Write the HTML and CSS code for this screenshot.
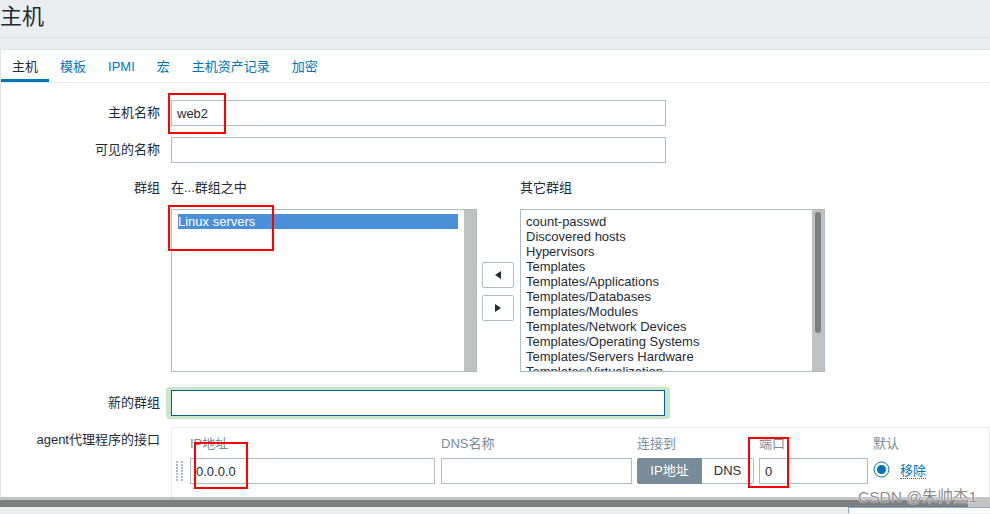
FILE: index.html
```html
<!DOCTYPE html>
<html>
<head>
<meta charset="utf-8">
<link rel="stylesheet" href="styles.css">
</head>
<body>
<header class="page-header"><h1 class="title">主机</h1></header>
<main class="card">
  <nav class="tabs">
    <span class="tab active">主机</span>
    <span class="tab">模板</span>
    <span class="tab">IPMI</span>
    <span class="tab">宏</span>
    <span class="tab">主机资产记录</span>
    <span class="tab">加密</span>
  </nav>
  <div class="form">
    <div class="row row-name">
      <label class="lbl">主机名称</label>
      <input class="text wide" value="web2">
    </div>
    <div class="row row-visible">
      <label class="lbl">可见的名称</label>
      <input class="text wide" value="">
    </div>
    <div class="row row-groups">
      <label class="lbl lbl-top">群组</label>
      <div class="groups">
        <div class="ghead">在...群组之中</div>
        <div></div>
        <div class="ghead">其它群组</div>
        <div class="listbox">
          <div class="opts"><div class="opt sel">Linux servers</div></div>
          <div class="sb"></div>
        </div>
        <div class="movebtns">
          <button class="mv"><svg width="6" height="8" viewBox="0 0 6 8"><polygon points="6,0 6,8 0,4" fill="#1f2c33"/></svg></button>
          <button class="mv"><svg width="6" height="8" viewBox="0 0 6 8"><polygon points="0,0 0,8 6,4" fill="#1f2c33"/></svg></button>
        </div>
        <div class="listbox">
          <div class="opts opts-right">
            <div class="opt">count-passwd</div>
            <div class="opt">Discovered hosts</div>
            <div class="opt">Hypervisors</div>
            <div class="opt">Templates</div>
            <div class="opt">Templates/Applications</div>
            <div class="opt">Templates/Databases</div>
            <div class="opt">Templates/Modules</div>
            <div class="opt">Templates/Network Devices</div>
            <div class="opt">Templates/Operating Systems</div>
            <div class="opt">Templates/Servers Hardware</div>
            <div class="opt">Templates/Virtualization</div>
          </div>
          <div class="sb"><div class="thumb"></div></div>
        </div>
      </div>
    </div>
    <div class="row row-new">
      <label class="lbl">新的群组</label>
      <div class="focus-wrap"><input class="text focused" value=""></div>
    </div>
    <div class="row row-iface">
      <label class="lbl lbl-iface">agent代理程序的接口</label>
      <div class="iface">
        <div class="igrid ihead">
          <span></span><span>IP地址</span><span>DNS名称</span><span>连接到</span><span>端口</span><span>默认</span><span></span>
        </div>
        <div class="igrid irow">
          <span class="handle"><svg width="8" height="20" viewBox="0 0 8 20">
            <g fill="#acbbc4">
              <rect x="0" y="0" width="2" height="2"/><rect x="5" y="0" width="2" height="2"/>
              <rect x="0" y="3" width="2" height="2"/><rect x="5" y="3" width="2" height="2"/>
              <rect x="0" y="6" width="2" height="2"/><rect x="5" y="6" width="2" height="2"/>
              <rect x="0" y="9" width="2" height="2"/><rect x="5" y="9" width="2" height="2"/>
              <rect x="0" y="12" width="2" height="2"/><rect x="5" y="12" width="2" height="2"/>
              <rect x="0" y="15" width="2" height="2"/><rect x="5" y="15" width="2" height="2"/>
              <rect x="0" y="18" width="2" height="2"/><rect x="5" y="18" width="2" height="2"/>
            </g></svg></span>
          <span><input class="text ip" value="0.0.0.0"></span>
          <span><input class="text dns" value=""></span>
          <span class="seg"><span class="segbtn on">IP地址</span><span class="segbtn">DNS</span></span>
          <span><input class="text port" value="0"></span>
          <span class="radio"><svg width="17" height="17" viewBox="0 0 17 17"><circle cx="8.5" cy="8.5" r="7.5" fill="#fff" stroke="#0275b8"/><circle cx="8.5" cy="8.5" r="4.5" fill="#0275b8"/></svg></span>
          <span class="linkcell"><span class="link">移除</span></span>
        </div>
      </div>
    </div>
  </div>
</main>
<div class="hscroll"><div class="hthumb"></div></div>
<footer class="bottom"><div class="peek">Ⅱ Macros Mac</div></footer>

<div class="mark m1"></div>
<div class="mark m2"></div>
<div class="mark m3"></div>
<div class="mark m4"></div>
<div class="watermark">CSDN @朱帅杰1</div>
</body>
</html>
```
FILE: styles.css
```css
* { box-sizing: border-box; }
html, body { margin: 0; padding: 0; }
body {
  width: 990px;
  height: 514px;
  overflow: hidden;
  position: relative;
  background: #ebeef0;
  font-family: "Liberation Sans", "Noto Sans CJK SC", sans-serif;
  font-size: 13px;
  color: #1f2c33;
}
.page-header {
  height: 38px;
  border-bottom: 1px solid #dde1e4;
}
.title {
  margin: 0;
  font-weight: normal;
  font-size: 22px;
  line-height: 34px;
  color: #1f2c33;
  padding-left: 0;
}
.card {
  margin-top: 11px;
  height: 448px;
  background: #fff;
  border-top: 1px solid #dfe4e7;
  border-left: 1px solid #dfe4e7;
  overflow: hidden;
}
.tabs {
  display: flex;
  height: 33px;
  border-bottom: 1px solid #e8e8e8;
}
.tab {
  padding: 0 11px;
  line-height: 33px;
  height: 32px;
  font-size: 13px;
  color: #0275b8;
}
.tab.active {
  color: #1f2c33;
  box-shadow: inset 0 -3px 0 #0275b8;
}
.form { padding-top: 17px; }
.row {
  display: grid;
  grid-template-columns: 159px auto;
  column-gap: 11px;
  align-items: center;
  justify-content: start;
}
.row-name { margin-bottom: 11px; }
.row-visible { margin-bottom: 15px; }
.row-groups { align-items: start; margin-bottom: 15px; }
.row-new { margin-bottom: 8px; }
.row-iface { align-items: start; }
.lbl {
  text-align: right;
  line-height: 20px;
  color: #1f2c33;
}
.lbl-iface { padding-top: 3px; }
.text {
  height: 26px;
  border: 1px solid #acbbc4;
  background: #fff;
  padding: 0 5px;
  font: inherit;
  color: #1f2c33;
  border-radius: 0;
  outline: none;
}
.wide { width: 495px; }
.groups {
  display: grid;
  grid-template-columns: 306px 43px 305px;
  row-gap: 11px;
}
.ghead { line-height: 20px; }
.listbox {
  height: 163px;
  border: 1px solid #acbbc4;
  display: flex;
  overflow: hidden;
}
.opts {
  flex: 1;
  padding: 4px 6px 0 6px;
  line-height: 15px;
  overflow: hidden;
}
.opts-right { padding-left: 5px; }
.opt { white-space: nowrap; height: 15px; }
.opt.sel { background: #4a90d9; color: #fff; }
.sb {
  width: 12px;
  background: #c1c1c1;
  padding: 2px 3px;
}
.thumb {
  width: 6px;
  height: 121px;
  background: #7f7f7f;
  border-radius: 3px;
}
.movebtns {
  display: flex;
  flex-direction: column;
  justify-content: center;
  gap: 7px;
  padding-left: 5px;
  padding-top: 2px;
}
.mv {
  width: 32px;
  height: 26px;
  border: 1px solid #acbbc4;
  border-radius: 2px;
  background: #fff;
  padding: 0;
  display: flex;
  align-items: center;
  justify-content: center;
}
.focus-wrap {
  margin-left: -5px;
  padding: 3px 5px;
  background: #c8e6c9;
  border-radius: 3px;
}
.focused {
  width: 494px;
  border-color: #0b6099;
  display: block;
}
.iface {
  width: 819px;
  height: 120px;
  border: 1px solid #ebebeb;
  padding-top: 7px;
}
.igrid {
  display: grid;
  grid-template-columns: 18px 251px 196px 122px 114px 27px auto;
  align-items: center;
}
.ihead {
  line-height: 18px;
  color: #768d99;
  margin-bottom: 5px;
}
.handle { padding-left: 4px; display: flex; }
.ip { width: 245px; display: block; }
.dns { width: 191px; display: block; }
.port { width: 109px; display: block; }
.seg { display: flex; width: 117px; }
.segbtn {
  height: 26px;
  line-height: 24px;
  text-align: center;
  border: 1px solid #acbbc4;
  background: #fff;
  color: #1f2c33;
}
.segbtn.on {
  width: 65px;
  background: #768d99;
  border-color: #768d99;
  color: #fff;
  border-radius: 2px 0 0 2px;
}
.segbtn:not(.on) { width: 52px; border-left: 0; border-radius: 0 2px 2px 0; }
.radio { display: flex; margin-top: -3px; }
.linkcell { margin-top: -3px; }
.link {
  color: #0275b8;
  border-bottom: 1px dotted #0275b8;
}
.hscroll {
  height: 12px;
  background: #c4c4c4;
  padding: 3px 22px 2px 0;
}
.hthumb {
  height: 7px;
  background: #7c8080;
}
.bottom {
  height: 6px;
  background: #ececec;
  display: flex;
  justify-content: flex-end;
  overflow: hidden;
  margin-top: -2px;
}
.peek {
  width: 142px;
  height: 8px;
  background: #fff;
  border-left: 1px solid #8aa9c6;
  border-top: 1px solid #8aa9c6;
  color: #0275b8;
  font-weight: bold;
  font-size: 14px;
  line-height: 26px;
  padding-left: 4px;
  overflow: hidden;
  white-space: nowrap;
}
.mark {
  position: absolute;
  border: 2px solid #ff0000;
}
.m1 { left: 168px; top: 93px; width: 58px; height: 41px; }
.m2 { left: 168px; top: 205px; width: 106px; height: 46px; }
.m3 { left: 194px; top: 442px; width: 54px; height: 47px; }
.m4 { left: 748px; top: 437px; width: 41px; height: 51px; }
.watermark {
  position: absolute;
  left: 858px;
  top: 487px;
  font-size: 15.5px;
  line-height: 20px;
  color: #8d8d8d;
  text-shadow: 0 0 2px #fff, 0 0 1px #fff;
  white-space: nowrap;
}
```
